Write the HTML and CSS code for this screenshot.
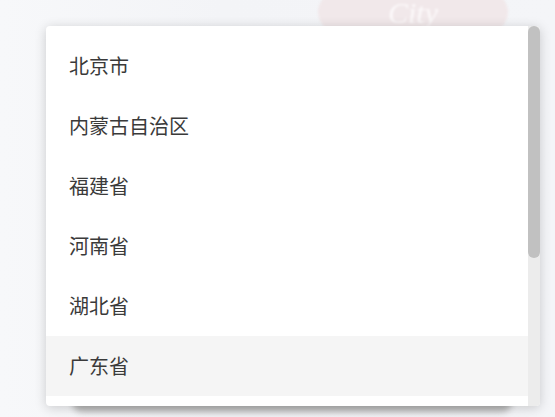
FILE: index.html
```html
<!DOCTYPE html>
<html lang="zh-CN">
<head>
    <meta charset="UTF-8">
    <meta name="viewport" content="width=device-width, initial-scale=1.0">
    <title>选择省份</title>
    <link rel="stylesheet" href="styles.css">
</head>
<body>

<div class="backdrop">
    <div class="banner-logo">City</div>
    <div class="select-box"></div>
</div>

<div class="dropdown">
    <ul class="option-list">
        <li class="option">北京市</li>
        <li class="option">内蒙古自治区</li>
        <li class="option">福建省</li>
        <li class="option">河南省</li>
        <li class="option">湖北省</li>
        <li class="option hover">广东省</li>
    </ul>
    <div class="scrollbar">
        <div class="scroll-thumb"></div>
    </div>
</div>

</body>
</html>
```

FILE: styles.css
```css
html, body {
    height: 100%;
}
body {
    margin: 0;
    font-family: "Noto Sans CJK SC", "Liberation Sans", sans-serif;
    background: linear-gradient(90deg, #f7f8fa 0%, #f3f4f7 40%, #f4f5f8 100%);
    color: #333;
    overflow: hidden;
}
.backdrop {
    position: relative;
    height: 100%;
}
/* blurred logo of the page behind the popup */
.banner-logo {
    position: absolute;
    left: 318px;
    top: -30px;
    width: 190px;
    height: 54px;
    padding-top: 30px;
    border-radius: 50%;
    background: #f1e8ea;
    color: #fcf9fa;
    font-family: "Liberation Serif", serif;
    font-style: italic;
    font-size: 30px;
    text-align: center;
    line-height: 26px;
    filter: blur(1.2px);
}
.select-box {
    position: absolute;
    left: 72px;
    top: 392px;
    width: 440px;
    height: 20px;
    border-radius: 10px;
    background: #b4b4b4;
    filter: blur(3px);
}
.dropdown {
    position: absolute;
    left: 46px;
    top: 26px;
    width: 494px;
    height: 380px;
    display: flex;
    background: #fff;
    border-radius: 4px;
    box-shadow: 0 2px 12px rgba(0, 0, 0, 0.18);
    overflow: hidden;
}
.option-list {
    flex: 1;
    list-style: none;
    margin: 0;
    padding: 10px 0;
}
.option {
    height: 60px;
    line-height: 60px;
    padding-left: 23px;
    font-size: 20px;
    color: #3a3a3a;
}
.option.hover {
    background-color: #f5f5f5;
}
.scrollbar {
    width: 12px;
    background: #ececec;
}
.scroll-thumb {
    height: 232px;
    background: #c1c1c1;
    border-radius: 6px;
}
```
